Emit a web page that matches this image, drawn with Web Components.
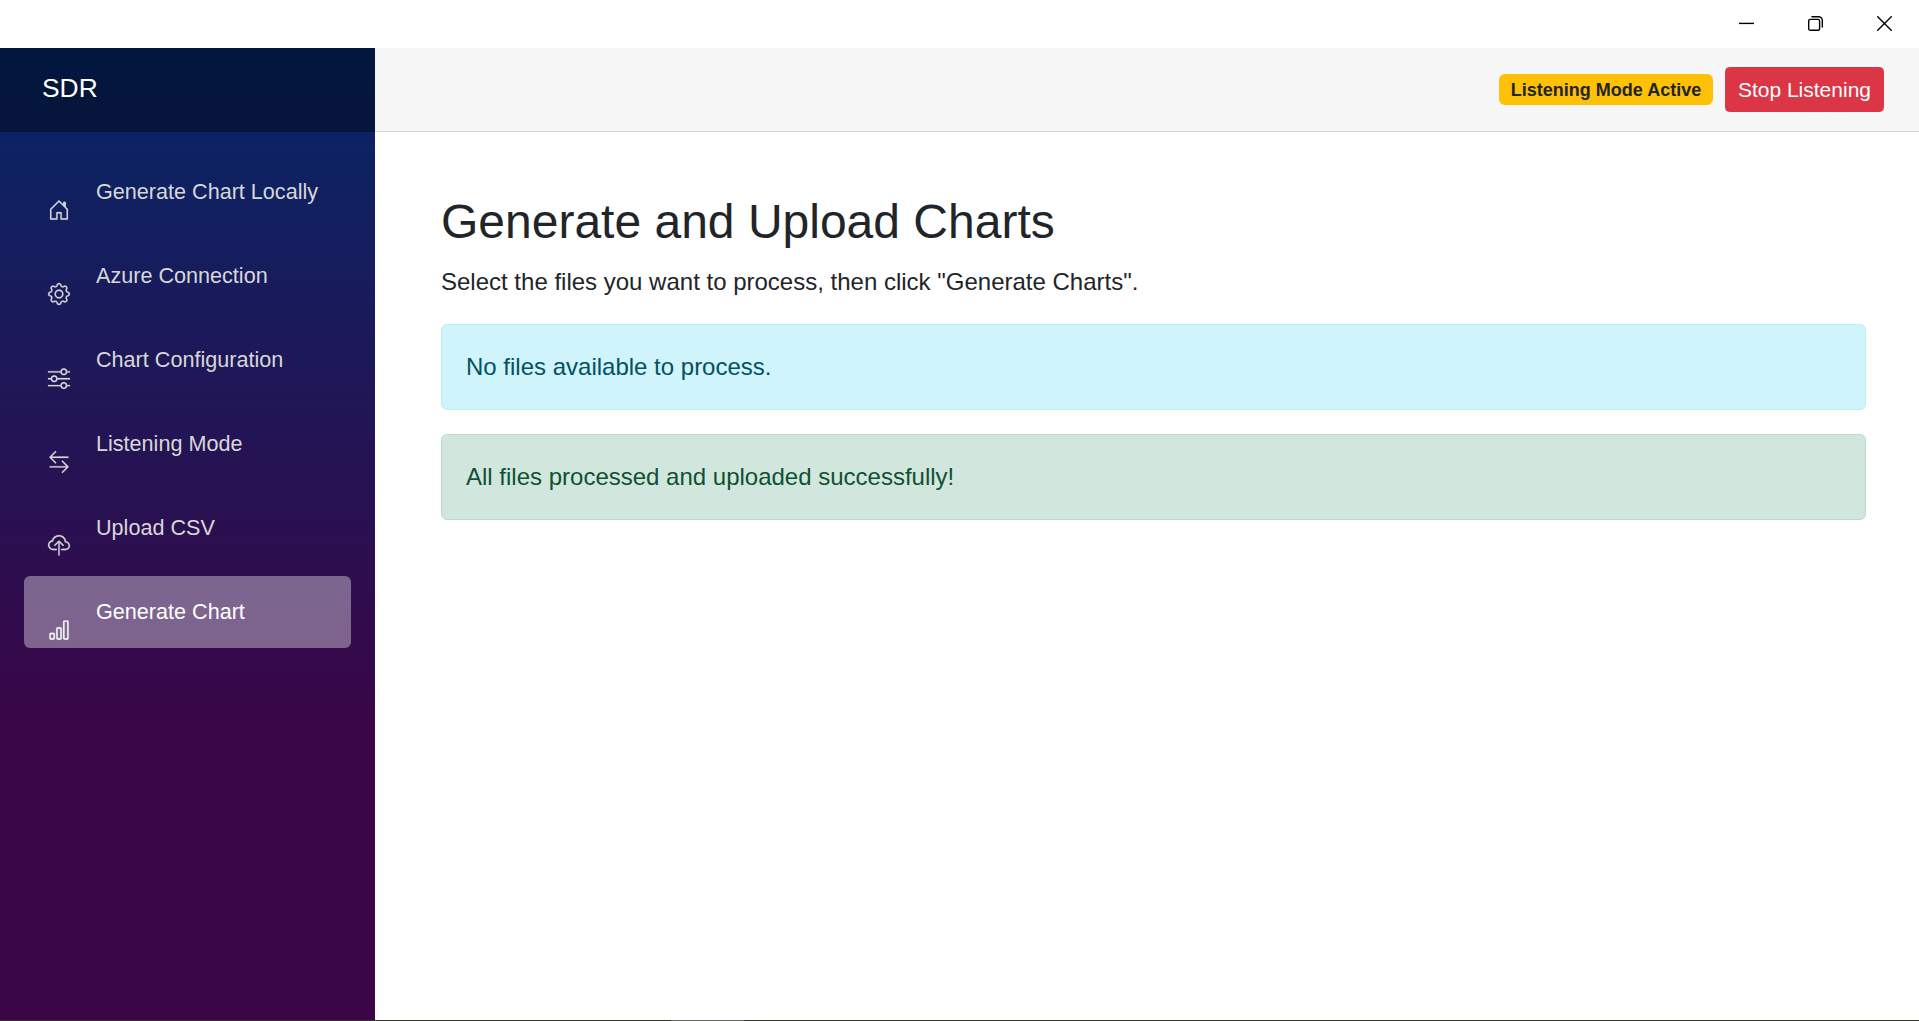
<!DOCTYPE html>
<html lang="en">
<head>
<meta charset="utf-8">
<title>SDR</title>
<style>
html,body{margin:0;height:100%;overflow:hidden;background:#fff}
body{font-family:"Liberation Sans",Arial,sans-serif;font-size:24px;line-height:36px;color:#212529}
</style>
</head>
<body>
<sdr-app></sdr-app>
<script>
const define = (name, html) => customElements.define(name, class extends HTMLElement {
  constructor() {
    super();
    this.attachShadow({ mode: 'open' }).innerHTML = html;
  }
});

const icons = {
  house: '<path d="M8.354 1.146a.5.5 0 0 0-.708 0l-6 6A.5.5 0 0 0 1.5 7.5v7a.5.5 0 0 0 .5.5h4.5a.5.5 0 0 0 .5-.5v-4h2v4a.5.5 0 0 0 .5.5H14a.5.5 0 0 0 .5-.5v-7a.5.5 0 0 0-.146-.354L13 5.793V2.5a.5.5 0 0 0-.5-.5h-1a.5.5 0 0 0-.5.5v1.293zM2.5 14V7.707l5.5-5.5 5.5 5.5V14H10v-4a.5.5 0 0 0-.5-.5h-3a.5.5 0 0 0-.5.5v4z"/>',
  gear: '<path d="M8 4.754a3.246 3.246 0 1 0 0 6.492 3.246 3.246 0 0 0 0-6.492M5.754 8a2.246 2.246 0 1 1 4.492 0 2.246 2.246 0 0 1-4.492 0"/><path d="M9.796 1.343c-.527-1.79-3.065-1.79-3.592 0l-.094.319a.873.873 0 0 1-1.255.52l-.292-.16c-1.64-.892-3.433.902-2.54 2.541l.159.292a.873.873 0 0 1-.52 1.255l-.319.094c-1.79.527-1.79 3.065 0 3.592l.319.094a.873.873 0 0 1 .52 1.255l-.16.292c-.892 1.64.901 3.434 2.541 2.54l.292-.159a.873.873 0 0 1 1.255.52l.094.319c.527 1.79 3.065 1.79 3.592 0l.094-.319a.873.873 0 0 1 1.255-.52l.292.16c1.64.893 3.434-.902 2.54-2.541l-.159-.292a.873.873 0 0 1 .52-1.255l.319-.094c1.79-.527 1.79-3.065 0-3.592l-.319-.094a.873.873 0 0 1-.52-1.255l.16-.292c.893-1.64-.902-3.433-2.541-2.54l-.292.159a.873.873 0 0 1-1.255-.52zm-2.633.283c.246-.835 1.428-.835 1.674 0l.094.319a1.873 1.873 0 0 0 2.693 1.115l.291-.16c.764-.415 1.6.42 1.184 1.185l-.159.292a1.873 1.873 0 0 0 1.116 2.692l.318.094c.835.246.835 1.428 0 1.674l-.319.094a1.873 1.873 0 0 0-1.115 2.693l.16.291c.415.764-.42 1.6-1.185 1.184l-.291-.159a1.873 1.873 0 0 0-2.693 1.116l-.094.318c-.246.835-1.428.835-1.674 0l-.094-.319a1.873 1.873 0 0 0-2.692-1.115l-.292.16c-.764.415-1.6-.42-1.184-1.185l.159-.291A1.873 1.873 0 0 0 1.945 8.93l-.319-.094c-.835-.246-.835-1.428 0-1.674l.319-.094A1.873 1.873 0 0 0 3.06 4.377l-.16-.292c-.415-.764.42-1.6 1.185-1.184l.292.159a1.873 1.873 0 0 0 2.692-1.115z"/>',
  sliders: '<path fill-rule="evenodd" d="M11.5 2a1.5 1.5 0 1 0 0 3 1.5 1.5 0 0 0 0-3M9.05 3a2.5 2.5 0 0 1 4.9 0H16v1h-2.05a2.5 2.5 0 0 1-4.9 0H0V3zM4.5 7a1.5 1.5 0 1 0 0 3 1.5 1.5 0 0 0 0-3M2.05 8a2.5 2.5 0 0 1 4.9 0H16v1H6.95a2.5 2.5 0 0 1-4.9 0H0V8zm9.45 4a1.5 1.5 0 1 0 0 3 1.5 1.5 0 0 0 0-3m-2.45 1a2.5 2.5 0 0 1 4.9 0H16v1h-2.05a2.5 2.5 0 0 1-4.9 0H0v-1z"/>',
  arrows: '<path fill-rule="evenodd" d="M1 11.5a.5.5 0 0 0 .5.5h11.793l-3.147 3.146a.5.5 0 0 0 .708.708l4-4a.5.5 0 0 0 0-.708l-4-4a.5.5 0 0 0-.708.708L13.293 11H1.5a.5.5 0 0 0-.5.5m14-7a.5.5 0 0 1-.5.5H2.707l3.147 3.146a.5.5 0 1 1-.708.708l-4-4a.5.5 0 0 1 0-.708l4-4a.5.5 0 1 1 .708.708L2.707 4H14.5a.5.5 0 0 1 .5.5"/>',
  cloud: '<path fill-rule="evenodd" d="M4.406 1.342A5.53 5.53 0 0 1 8 0c2.69 0 4.923 2 5.166 4.579C14.758 4.804 16 6.137 16 7.773 16 9.569 14.502 11 12.687 11H10a.5.5 0 0 1 0-1h2.688C13.979 10 15 8.988 15 7.773c0-1.216-1.02-2.228-2.313-2.228h-.5v-.5C12.188 2.825 10.328 1 8 1a4.53 4.53 0 0 0-2.941 1.1c-.757.652-1.153 1.438-1.153 2.055v.448l-.445.049C2.064 4.805 1 5.952 1 7.318 1 8.785 2.23 10 3.781 10H6a.5.5 0 0 1 0 1H3.781C1.708 11 0 9.366 0 7.318c0-1.763 1.266-3.223 2.942-3.593.143-.863.698-1.723 1.464-2.383z"/><path fill-rule="evenodd" d="M7.646 4.146a.5.5 0 0 1 .708 0l3 3a.5.5 0 0 1-.708.708L8.5 5.707V14.5a.5.5 0 0 1-1 0V5.707L5.354 7.854a.5.5 0 1 1-.708-.708z"/>',
  bars: '<path d="M4 11H2v3h2zm5-4H7v7h2zm5-5v12h-2V2zm-2-1a1 1 0 0 0-1 1v12a1 1 0 0 0 1 1h2a1 1 0 0 0 1-1V2a1 1 0 0 0-1-1zM6 7a1 1 0 0 1 1-1h2a1 1 0 0 1 1 1v7a1 1 0 0 1-1 1H7a1 1 0 0 1-1-1zm-5 4a1 1 0 0 1 1-1h2a1 1 0 0 1 1 1v3a1 1 0 0 1-1 1H2a1 1 0 0 1-1-1z"/>'
};

define('title-bar', `
<style>
:host{display:flex;height:48px;box-sizing:border-box;padding-bottom:1px;justify-content:flex-end;align-items:center;background:#fff}
span{width:69px;display:flex;justify-content:center}
svg{display:block;fill:none;stroke:#000;stroke-width:1.4}
</style>
<span><svg width="15" height="15" viewBox="0 0 15 15"><path d="M0 7.4h15"/></svg></span>
<span><svg width="15" height="15" viewBox="0 0 15 15"><rect x=".7" y="3.4" width="10.9" height="10.9" rx="1.6"/><path d="M3.4.7h7.1a3.8 3.8 0 0 1 3.8 3.8v7.1"/></svg></span>
<span><svg width="15" height="15" viewBox="0 0 15 15"><path d="M.2.2l14.6 14.6M14.8.2L.2 14.8"/></svg></span>`);

customElements.define('nav-item', class extends HTMLElement {
  constructor() {
    super();
    this.attachShadow({ mode: 'open' }).innerHTML = `
<style>
:host{display:flex;height:72px;border-radius:6px;padding-left:24px;box-sizing:border-box;color:#d7d7d7;font-size:21.6px;line-height:72px;gap:26px}
:host([active]){background:rgba(255,255,255,.37);color:#fff}
svg{display:block;width:22px;height:22px;margin-top:43px;fill:currentColor;stroke:currentColor;stroke-width:.15;overflow:visible}
</style>
<svg viewBox="0 0 16 16">${icons[this.getAttribute('icon')]}</svg><span><slot></slot></span>`;
  }
});

define('side-bar', `
<style>
:host{display:flex;flex-direction:column;width:375px;flex:none;background:linear-gradient(180deg,rgb(5,39,103) 0%,#3a0647 70%)}
header{height:84px;background:rgba(0,0,0,.4);box-sizing:border-box;padding-left:42px;color:#fff;font-size:26.4px;line-height:81px}
nav{display:flex;flex-direction:column;gap:12px;padding:24px}
</style>
<header>SDR</header>
<nav>
<nav-item icon="house">Generate Chart Locally</nav-item>
<nav-item icon="gear">Azure Connection</nav-item>
<nav-item icon="sliders">Chart Configuration</nav-item>
<nav-item icon="arrows">Listening Mode</nav-item>
<nav-item icon="cloud">Upload CSV</nav-item>
<nav-item icon="bars" active>Generate Chart</nav-item>
</nav>`);

define('status-badge', `
<style>
:host{display:block;background:#ffc107;color:#212529;border-radius:6px;padding:6.5px 11.7px;font-size:18px;font-weight:700;line-height:18px;white-space:nowrap}
</style><slot></slot>`);

define('danger-button', `
<style>
:host{display:block}
button{display:block;height:45px;margin:0;padding:0 12px;border:1px solid #dc3545;border-radius:4.5px;background:#dc3545;color:#fff;font:21px/43px "Liberation Sans",Arial,sans-serif;white-space:nowrap}
</style><button><slot></slot></button>`);

define('top-row', `
<style>
:host{display:flex;height:84px;box-sizing:border-box;align-items:center;justify-content:flex-end;gap:12px;padding:0 35px 0 0;background:#f7f7f7;border-bottom:1px solid #d6d5d5}
</style>
<status-badge>Listening Mode Active</status-badge>
<danger-button>Stop Listening</danger-button>`);

define('alert-box', `
<style>
:host{display:block;box-sizing:border-box;height:86px;border:1px solid #b6effb;border-radius:6px;background:#cff4fc;color:#055160;padding:24px;line-height:36px}
:host([kind=success]){background:#d1e7dd;border-color:#badbcc;color:#0f5132}
</style><slot></slot>`);

define('chart-page', `
<style>
:host{display:flex;flex-direction:column;padding:61px 53px 0 66px}
h1{margin:0 0 12px;font-size:48px;line-height:58px;font-weight:400}
p{margin:0 0 23px;line-height:38px}
alert-box+alert-box{margin-top:24px}
</style>
<h1>Generate and Upload Charts</h1>
<p>Select the files you want to process, then click "Generate Charts".</p>
<alert-box>No files available to process.</alert-box>
<alert-box kind="success">All files processed and uploaded successfully!</alert-box>`);

define('window-edge', `
<style>
:host{display:flex;height:1px;background:#36352d}
i{width:73px;margin-left:671px;background:#66655a}
</style><i></i>`);

define('sdr-app', `
<style>
:host{display:flex;flex-direction:column;height:100vh}
section{display:flex;flex:1;min-height:0}
main{flex:1;min-width:0}
</style>
<title-bar></title-bar>
<section><side-bar></side-bar><main><top-row></top-row><chart-page></chart-page></main></section>
<window-edge></window-edge>`);
</script>
</body>
</html>
